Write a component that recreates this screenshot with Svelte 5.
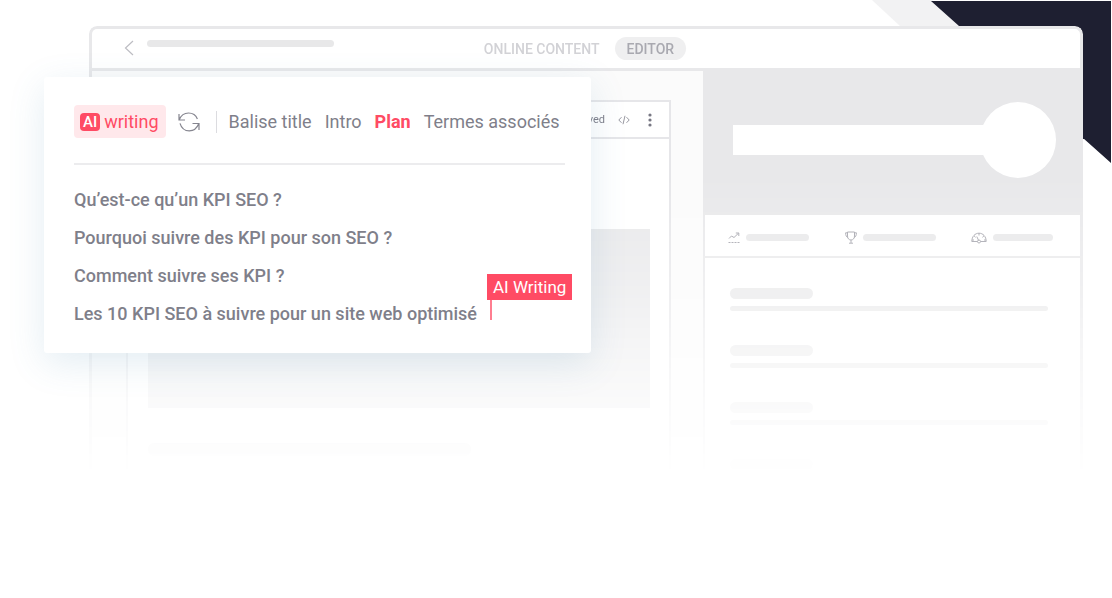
<script>
  const sections = ["Balise title", "Intro", "Plan", "Termes associés"];
  const outline = [
    "Qu’est-ce qu’un KPI SEO ?",
    "Pourquoi suivre des KPI pour son SEO ?",
    "Comment suivre ses KPI ?",
    "Les 10 KPI SEO à suivre pour un site web optimisé",
  ];
  const fields = [1, 2, 3, 4];

  let active = $state("Plan");
  let mode = $state("EDITOR");
</script>

<main class="hero">
  <svg class="corner" viewBox="0 0 240 164" aria-hidden="true">
    <path d="M0 0H60L88 26H28Z" fill="#f2f2f3" />
    <path d="M59 1H239V163L211 138V26H87Z" fill="#1e1f31" />
    <path d="M200 20H212V139H200Z" fill="#1e1f31" />
  </svg>

  <div class="window">
    <header class="topbar">
      <div class="crumb">
        <button class="back" aria-label="Retour">
          <svg width="10" height="16" viewBox="0 0 10 16">
            <path d="M9 1L1.5 8L9 15" fill="none" stroke="#bdbdc3" stroke-width="1.2" />
          </svg>
        </button>
        <span class="line title-line"></span>
      </div>
      <nav class="modes">
        {#each ["ONLINE CONTENT", "EDITOR"] as name}
          <button class:on={mode === name} onclick={() => (mode = name)}>{name}</button>
        {/each}
      </nav>
    </header>

    <div class="workspace">
      <section class="canvas">
        <article class="doc">
          <div class="doc-bar">
            <span>Saved</span>
            <svg width="12" height="10" viewBox="0 0 12 10" fill="none" stroke="#8c8c96">
              <path d="M3.5 2.2L.8 5L3.5 7.8M8.5 2.2L11.2 5L8.5 7.8M7 .8L5 9.2" stroke-width=".9" />
            </svg>
            <svg width="4" height="14" viewBox="0 0 4 14" fill="#777783">
              <circle cx="2" cy="2" r="1.6" />
              <circle cx="2" cy="7" r="1.6" />
              <circle cx="2" cy="12" r="1.6" />
            </svg>
          </div>
          <div class="doc-body">
            <div class="image"></div>
            <div class="line heading"></div>
          </div>
        </article>
      </section>

      <aside>
        <div class="score">
          <div class="track"></div>
          <div class="knob"></div>
        </div>
        <div class="tabs">
          <div class="tab">
            <svg width="12" height="12" viewBox="0 0 12 12" fill="none" stroke="#a2a2aa">
              <path d="M1 6.5L3.5 4L6 5.5L10.5 1.2M7.8 1H10.8V4" />
              <path d="M.5 10.5H11.5" stroke-dasharray="2 1" />
            </svg>
            <span class="line"></span>
          </div>
          <div class="tab">
            <svg width="12" height="13" viewBox="0 0 12 13" fill="none" stroke="#a2a2aa">
              <path d="M2.5 1H9.5V5C9.5 7.5 8 9 6 9S2.5 7.5 2.5 5ZM2.5 1.8H.6C.6 4.5 1.4 6 3 6.5M9.5 1.8H11.4C11.4 4.5 10.6 6 9 6.5M6 9V12M4 12.2H8" />
            </svg>
            <span class="line wide"></span>
          </div>
          <div class="tab">
            <svg width="16" height="12" viewBox="0 0 16 12" fill="none" stroke="#a2a2aa">
              <path d="M6.5 9.5H.8C.8 4.5 4 1.2 8 1.2S15.2 4.5 15.2 9.5H9.5M8 1.2V3.5M3 3.8L4.6 5.3M13 3.8L11.4 5.3M1 8H3M13 8H15M5.8 4.5L7.6 8.5" />
              <circle cx="8" cy="9.5" r="1.5" />
            </svg>
            <span class="line short"></span>
          </div>
        </div>
        <div class="fields">
          {#each fields as field (field)}
            <div class="field">
              <div class="line tag"></div>
              <div class="line rule"></div>
            </div>
          {/each}
        </div>
      </aside>
    </div>
  </div>

  <section class="card">
    <div class="toolbar">
      <button class="ai"><span class="badge">AI</span>writing</button>
      <button class="refresh" aria-label="Régénérer">
        <svg width="22" height="20" viewBox="0 0 22 20" fill="none" stroke="#85858f" stroke-width="1.2">
          <path d="M1 2V8H7M1.2 7.8C3 3.5 6.5 1 10.5 1C14.8 1 18 3.3 19.4 7" />
          <path d="M21 18V11.5H14.5M20.7 11.7C19 16 15.5 18.8 11.3 18.8C7 18.8 3.4 16 2 11.3" />
        </svg>
      </button>
      <nav class="sections">
        {#each sections as name}
          <button class:active={active === name} onclick={() => (active = name)}>{name}</button>
        {/each}
      </nav>
    </div>
    <ul class="outline">
      {#each outline as item, i}
        <li>
          <span>
            {item}
            {#if i === outline.length - 1}
              <span class="cursor"><span class="flag">AI Writing</span></span>
            {/if}
          </span>
        </li>
      {/each}
    </ul>
  </section>
</main>

<style>
  :global(body) {
    background: #fff;
  }

  .hero {
    position: relative;
    padding: 26px 29px 0 89px;
    overflow: hidden;
    font-family: Roboto, "Liberation Sans", sans-serif;
    color: #7f7f8a;
  }

  button {
    padding: 0;
    border: 0;
    background: none;
    font: inherit;
    color: inherit;
    white-space: nowrap;
    cursor: pointer;
  }

  svg {
    display: block;
    flex: none;
  }

  .corner {
    position: absolute;
    top: 0;
    right: 0;
    width: 240px;
    height: 164px;
  }

  .line {
    display: block;
    height: 7px;
    border-radius: 6px;
    background: #e8e8e9;
  }

  .window {
    position: relative;
    border: 3px solid #e8e8ea;
    border-bottom: 0;
    border-radius: 8px 8px 0 0;
    background: #fff;
    mask-image: linear-gradient(
      #000 150px,
      rgb(0 0 0 / 0.66) 265px,
      rgb(0 0 0 / 0.4) 325px,
      rgb(0 0 0 / 0.2) 381px,
      rgb(0 0 0 / 0.1) 420px,
      rgb(0 0 0 / 0.04) 434px,
      transparent 455px
    );
  }

  .topbar {
    display: grid;
    grid-template-columns: 1fr auto 1fr;
    height: 39px;
    padding-right: 14px;
    border-bottom: 3px solid #e8e8ea;
  }

  .crumb {
    display: flex;
    gap: 13px;
    padding: 11px 0 0 32px;
  }

  .back {
    height: 16px;
  }

  .title-line {
    width: 187px;
  }

  .modes {
    display: flex;
    align-items: center;
    gap: 3px;
    font-size: 14px;
    font-weight: 500;
    color: #d2d2d6;
  }

  .modes button {
    height: 23px;
    padding: 0 12px;
    border-radius: 12px;
  }

  .modes .on {
    background: #efeff0;
    color: #a9a9b0;
  }

  .workspace {
    display: grid;
    grid-template-columns: minmax(0, 1fr) 377px;
  }

  .canvas {
    padding: 29px 32px 0 34px;
    background: #fbfbfb;
  }

  .doc {
    height: 386px;
    border: 2px solid #e6e6e9;
    border-width: 2px 2px 0;
    background: #fff;
  }

  .doc-bar {
    display: flex;
    justify-content: flex-end;
    align-items: center;
    gap: 18px;
    height: 35px;
    padding-right: 17px;
    border-bottom: 2px solid #e6e6e9;
    font-size: 11px;
  }

  .doc-bar span {
    margin-right: -5px;
  }

  .doc-body {
    padding: 90px 19px 0 20px;
  }

  .image {
    height: 179px;
    background: #e8e8ea;
  }

  .heading {
    width: 323px;
    height: 13px;
    margin-top: 35px;
  }

  aside {
    border-left: 2px solid #e8e8ea;
  }

  .score {
    display: flex;
    align-items: center;
    box-sizing: border-box;
    height: 144px;
    padding: 0 24px 6px 28px;
    background: #e8e8ea;
  }

  .track {
    flex: 1;
    height: 30px;
    margin-right: -8px;
    background: #fff;
  }

  .knob {
    width: 76px;
    height: 76px;
    border-radius: 50%;
    background: #fff;
  }

  .tabs {
    display: flex;
    justify-content: space-between;
    box-sizing: border-box;
    height: 43px;
    padding: 4px 27px 0 23px;
    border-bottom: 2px solid #e8e8ea;
  }

  .tab {
    display: flex;
    align-items: center;
    gap: 6px;
  }

  .tab .line {
    width: 63px;
  }

  .tab .wide {
    width: 73px;
  }

  .tab .short {
    width: 60px;
  }

  .fields {
    padding: 30px 32px 0 25px;
  }

  .field {
    height: 57px;
  }

  .tag {
    width: 83px;
    height: 11px;
    margin-bottom: 7px;
  }

  .rule {
    height: 5px;
  }

  .card {
    position: absolute;
    top: 77px;
    left: 44px;
    box-sizing: border-box;
    width: 547px;
    padding: 28px 26px 20px 30px;
    border-radius: 3px;
    background: #fff;
    box-shadow: 0 10px 36px rgb(70 135 175 / 0.15);
  }

  .toolbar {
    display: flex;
    align-items: center;
    padding-bottom: 25px;
    border-bottom: 2px solid #ececee;
    font-size: 18px;
  }

  .ai {
    display: flex;
    align-items: center;
    gap: 4px;
    height: 33px;
    padding: 0 7px 0 6px;
    border-radius: 4px;
    background: #ffe8eb;
    color: #ff4b64;
  }

  .badge {
    padding: 0 3px;
    border-radius: 4px;
    background: #ff4b64;
    color: #fff;
    font-size: 15px;
    font-weight: 500;
    line-height: 18px;
  }

  .refresh {
    margin: 0 16px 0 12px;
  }

  .sections {
    display: flex;
    align-items: center;
    gap: 13px;
    height: 22px;
    padding-left: 12px;
    border-left: 1px solid #dcdce0;
  }

  .sections .active {
    color: #ff4b64;
    font-weight: 700;
  }

  .outline {
    margin: 0;
    padding: 16px 0 0;
    list-style: none;
    font-size: 18px;
    font-weight: 500;
    line-height: 38px;
  }

  .outline li > span {
    position: relative;
    white-space: nowrap;
  }

  .cursor {
    position: absolute;
    right: -15px;
    bottom: 4px;
    width: 2px;
    height: 20px;
    background: #ff7e90;
  }

  .flag {
    position: absolute;
    bottom: 20px;
    left: -3px;
    padding: 0 6px;
    background: #ff4b64;
    color: #fff;
    font-size: 17px;
    font-weight: 400;
    line-height: 26px;
  }
</style>
